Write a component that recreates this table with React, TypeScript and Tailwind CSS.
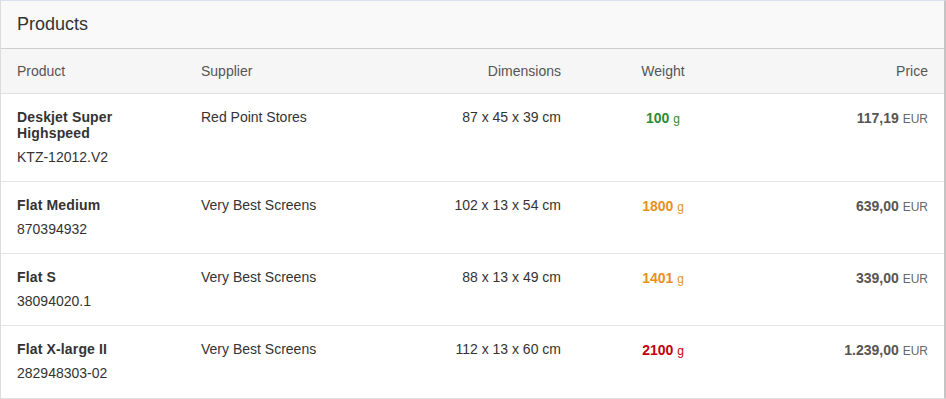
const rows = [
  { name: 'Deskjet Super Highspeed', code: 'KTZ-12012.V2', supplier: 'Red Point Stores', dims: '87 x 45 x 39 cm', weight: '100', weightColor: 'text-[#2f8a2f]', price: '117,19' },
  { name: 'Flat Medium', code: '870394932', supplier: 'Very Best Screens', dims: '102 x 13 x 54 cm', weight: '1800', weightColor: 'text-[#e9901c]', price: '639,00' },
  { name: 'Flat S', code: '38094020.1', supplier: 'Very Best Screens', dims: '88 x 13 x 49 cm', weight: '1401', weightColor: 'text-[#e9901c]', price: '339,00' },
  { name: 'Flat X-large II', code: '282948303-02', supplier: 'Very Best Screens', dims: '112 x 13 x 60 cm', weight: '2100', weightColor: 'text-[#c4000a]', price: '1.239,00' },
];

const App = () => {
  return (
    <div className="w-[946px] h-[399px] bg-white font-['Liberation_Sans',Arial,sans-serif] text-[#333]">
      <div className="h-full border-t border-t-[#d7e3f0] border-l border-l-[#dcdcdc] border-r-2 border-r-[#c4c4c4] border-b border-b-[#e0e0e0] overflow-hidden">
        {/* Panel title */}
        <div className="h-[48px] bg-[#f9f9f9] border-b border-[#cfcfcf] pl-4 pb-0.5 flex items-center">
          <h1 className="text-[18px] leading-[22px] text-[#333]">Products</h1>
        </div>

        <table className="w-full table-fixed border-collapse text-[14px] leading-4">
          <colgroup>
            <col className="w-[184px]" />
            <col className="w-[184px]" />
            <col className="w-[208px]" />
            <col className="w-[172px]" />
            <col />
          </colgroup>
          <thead>
            <tr className="h-[44px] bg-[#f6f6f6] border-b border-[#e2e2e2] text-[#555]">
              <th className="font-normal text-left px-4">Product</th>
              <th className="font-normal text-left px-4">Supplier</th>
              <th className="font-normal text-right px-4">Dimensions</th>
              <th className="font-normal text-center px-4">Weight</th>
              <th className="font-normal text-right px-4">Price</th>
            </tr>
          </thead>
          <tbody>
            {rows.map((r, i) => (
              <tr key={i} className="border-b border-[#e4e4e4] last:border-b-0 align-top">
                <td className="px-4 pt-[15px] pb-4">
                  <div className="font-bold text-[#333] tracking-[0.15px]">{r.name}</div>
                  <div className="mt-2">{r.code}</div>
                </td>
                <td className="px-4 pt-[15px]">{r.supplier}</td>
                <td className="px-4 pt-[15px] text-right">{r.dims}</td>
                <td className={`px-4 pt-[16px] text-center ${r.weightColor}`}>
                  <span className="font-bold text-[14px]">{r.weight}</span>{' '}
                  <span className="text-[12px]">g</span>
                </td>
                <td className="px-4 pt-[16px] text-right">
                  <span className="font-bold text-[14px] text-[#555]">{r.price}</span>{' '}
                  <span className="text-[12px] text-[#666]">EUR</span>
                </td>
              </tr>
            ))}
          </tbody>
        </table>
      </div>
    </div>
  );
};

export default App;
